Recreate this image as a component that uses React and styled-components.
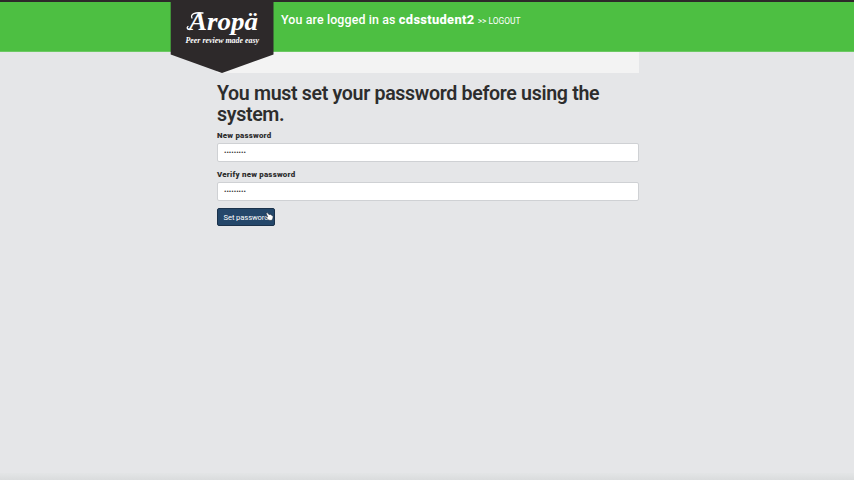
import React from "react";
import styled, { createGlobalStyle } from "styled-components";

const GlobalStyle = createGlobalStyle`
  *, *::before, *::after { box-sizing: border-box; }
  body {
    margin: 0;
    background: #e5e6e8;
    color: #2d2d2d;
    font-family: Roboto, "Liberation Sans", sans-serif;
  }
`;

const Page = styled.div`
  display: flex;
  flex-direction: column;
  height: 100vh;
  overflow: hidden;
`;

const Header = styled.header`
  position: relative;
  z-index: 1;
  display: flex;
  flex: none;
  align-items: flex-start;
  height: 52px;
  padding-left: 170px;
  background: #4dbf42;
  border-top: 2px solid #2d292a;
  border-bottom: 1px solid #6cc963;
`;

const Logo = styled.svg`
  flex: none;
  display: block;
  width: 104px;
  height: 72px;
  margin-top: -1px;
`;

const LogoText = styled.text`
  font-family: "Liberation Serif", serif;
  font-style: italic;
  font-weight: 700;
  fill: #fff;
`;

const Account = styled.div`
  padding: 10px 0 0 7px;
  color: #fff;
  font-size: 12.4px;
  font-weight: 550;
  letter-spacing: 0.13px;
  line-height: 16px;
  white-space: nowrap;
`;

const User = styled.strong`
  font-size: 12.9px;
  font-weight: 800;
  letter-spacing: 0.32px;
`;

const Logout = styled.a`
  font-size: 8.4px;
  font-weight: 400;
  letter-spacing: 0;
  color: #fff;
`;

const Main = styled.main`
  display: flex;
  flex: 1;
  flex-direction: column;
  width: 422px;
  margin-left: 217px;
`;

const Strip = styled.div`
  flex: none;
  height: 21px;
  background: #f3f3f3;
`;

const Title = styled.h1`
  margin: 10px 0 5px;
  font-size: 19.6px;
  font-weight: 600;
  letter-spacing: -0.33px;
  line-height: 21px;
`;

const Form = styled.form`
  display: flex;
  flex-direction: column;
  align-items: flex-start;
`;

const Label = styled.label`
  height: 13px;
  font-size: 7.9px;
  font-weight: 900;
  letter-spacing: 0.22px;
  line-height: 12px;
`;

const Input = styled.input`
  width: 422px;
  height: 19px;
  margin: 0 0 7px;
  padding: 0 6px;
  background: #fff;
  border: 1px solid #cfd1d4;
  border-radius: 2px;
  color: #333;
  font-family: Roboto, sans-serif;
  font-size: 7.2px;
  outline: none;
`;

const SubmitRow = styled.div`
  position: relative;
  display: flex;
`;

const Button = styled.button`
  width: 58px;
  height: 18px;
  padding: 1px 0 0 5.5px;
  background: #24476a;
  border: 1px solid #1b324b;
  border-radius: 2px;
  color: #fff;
  font-family: Roboto, sans-serif;
  font-size: 7.6px;
  letter-spacing: -0.08px;
  line-height: 16px;
  text-align: left;
  white-space: nowrap;
`;

const Pointer = styled.svg`
  position: absolute;
  left: 48px;
  top: 4px;
  width: 9px;
  height: 9px;
  pointer-events: none;
`;

const Footer = styled.footer`
  flex: none;
  height: 7px;
  background: linear-gradient(#e3e5e6, #dadcdd);
`;

function Brand() {
  return (
    <Logo viewBox="0 0 104 72" aria-label="Aropä">
      <path d="M.7 0H103.5V53.5L52 72 .7 53.5Z" fill="#2d292a" />
      <LogoText x="19" y="29" fontSize="25" textLength="18" lengthAdjust="spacingAndGlyphs">A</LogoText>
      <LogoText x="37" y="29" fontSize="26" textLength="51" lengthAdjust="spacingAndGlyphs">ropä</LogoText>
      <path d="M22 17C20 13 25 11 33 12M20 28.5C17 28.5 16.5 26.5 18 25.5" fill="none" stroke="#fff" strokeWidth="1.3" strokeLinecap="round" />
      <LogoText x="15.5" y="41.5" fontSize="7.7" textLength="73.5" lengthAdjust="spacingAndGlyphs">Peer review made easy</LogoText>
    </Logo>
  );
}

function PasswordField({ id, label }) {
  return (
    <>
      <Label htmlFor={id}>{label}</Label>
      <Input id={id} type="password" defaultValue="password1" />
    </>
  );
}

export default function App() {
  return (
    <Page>
      <GlobalStyle />
      <Header>
        <Brand />
        <Account>
          You are logged in as <User>cdsstudent2</User> <Logout>&gt;&gt; LOGOUT</Logout>
        </Account>
      </Header>
      <Main>
        <Strip />
        <Title>You must set your password before using the system.</Title>
        <Form>
          <PasswordField id="new" label="New password" />
          <PasswordField id="verify" label="Verify new password" />
          <SubmitRow>
            <Button type="button">Set password</Button>
            <Pointer viewBox="0 0 9 9">
              <path d="M1 1.2 2.2.5 4 2.6 5.2 2.2 8.2 4.2 7.8 7 6.2 8.5 3.8 8.2.8 5.6 1.2 4.6 2.8 5Z" fill="#fff" stroke="#162536" strokeWidth=".6" />
            </Pointer>
          </SubmitRow>
        </Form>
      </Main>
      <Footer />
    </Page>
  );
}
